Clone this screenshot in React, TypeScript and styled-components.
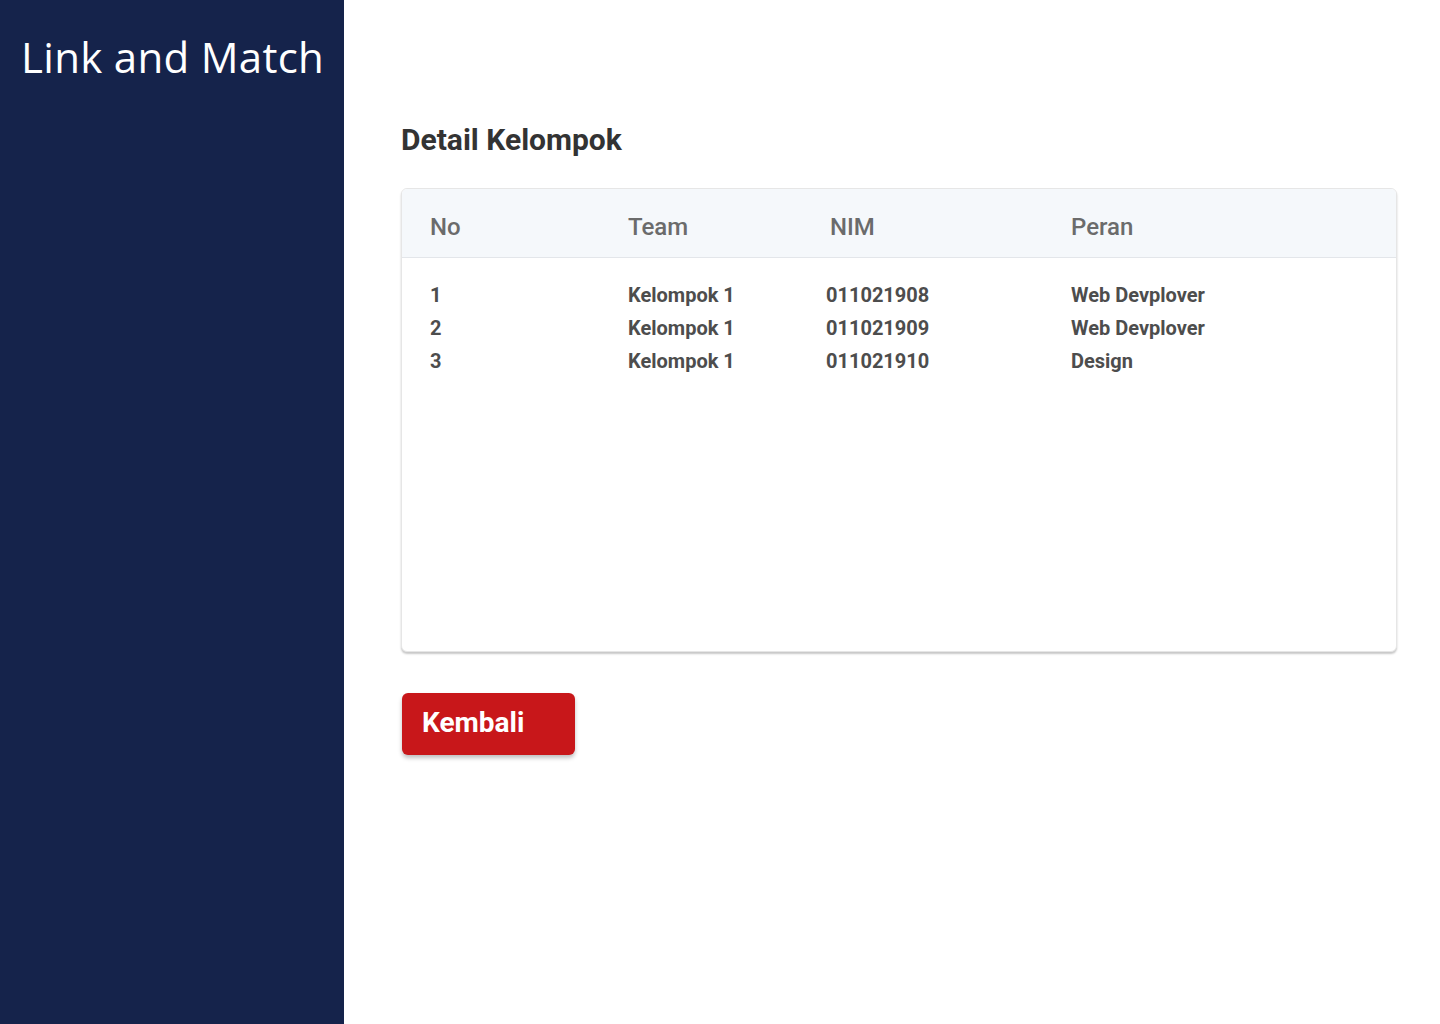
import React from 'react';
import styled, { createGlobalStyle } from 'styled-components';

const GlobalStyle = createGlobalStyle`
  html, body {
    margin: 0;
    padding: 0;
    background: #fff;
  }
  * {
    box-sizing: border-box;
  }
`;

const Layout = styled.div`
  display: flex;
  min-height: 1024px;
  font-family: Roboto, 'Liberation Sans', sans-serif;
`;

const Sidebar = styled.aside`
  width: 344px;
  flex-shrink: 0;
  background-color: #15234b;
  padding: 30px 0 0 21px;
`;

const Brand = styled.h1`
  margin: 0;
  font-family: 'Open Sans', Lato, sans-serif;
  font-weight: 400;
  font-size: 42px;
  letter-spacing: 0.3px;
  line-height: 54px;
  color: #ffffff;
`;

const Main = styled.main`
  flex: 1;
  padding: 120px 44px 0 57px;
`;

const Title = styled.h2`
  margin: 0 0 28px;
  font-size: 30px;
  font-weight: 700;
  line-height: 40px;
  color: #333333;
`;

const Card = styled.div`
  width: 996px;
  height: 464px;
  border: 1px solid #e6e6e6;
  border-radius: 6px;
  background: #fff;
  box-shadow: 0 2px 2px rgba(0, 0, 0, 0.22);
  overflow: hidden;
`;

const Row = styled.div`
  display: grid;
  grid-template-columns: 198px 198px 245px 1fr;
  padding-left: 28px;
`;

const HeadRow = styled(Row)`
  height: 69px;
  padding-top: 7px;
  align-items: center;
  background: #f5f8fb;
  border-bottom: 1px solid #e3e6ea;
`;

const HeadCell = styled.div<{ $shift?: number }>`
  font-size: 24px;
  font-weight: 500;
  color: #6b6b6b;
  padding-left: ${(p) => p.$shift || 0}px;
`;

const Body = styled.div`
  padding-top: 20px;
`;

const BodyRow = styled(Row)`
  height: 33px;
  align-items: center;
`;

const Cell = styled.div`
  font-size: 20px;
  font-weight: 700;
  color: #4d4d4d;
`;

const BackButton = styled.button`
  margin: 41px 0 0 1px;
  width: 173px;
  height: 62px;
  border: none;
  border-radius: 6px;
  background-color: #c8171a;
  color: #fff;
  font-family: Roboto, 'Liberation Sans', sans-serif;
  font-size: 28px;
  font-weight: 700;
  text-align: left;
  padding: 0 0 4px 20px;
  box-shadow: 0 3px 4px rgba(0, 0, 0, 0.25);
  cursor: pointer;
`;

interface Member {
  no: number;
  team: string;
  nim: string;
  peran: string;
}

const members: Member[] = [
  { no: 1, team: 'Kelompok 1', nim: '011021908', peran: 'Web Devplover' },
  { no: 2, team: 'Kelompok 1', nim: '011021909', peran: 'Web Devplover' },
  { no: 3, team: 'Kelompok 1', nim: '011021910', peran: 'Design' },
];

const App: React.FC = () => {
  return (
    <>
      <GlobalStyle />
      <Layout>
        <Sidebar>
          <Brand>Link and Match</Brand>
        </Sidebar>
        <Main>
          <Title>Detail Kelompok</Title>
          <Card>
            <HeadRow>
              <HeadCell>No</HeadCell>
              <HeadCell>Team</HeadCell>
              <HeadCell $shift={4}>NIM</HeadCell>
              <HeadCell>Peran</HeadCell>
            </HeadRow>
            <Body>
              {members.map((m) => (
                <BodyRow key={m.no}>
                  <Cell>{m.no}</Cell>
                  <Cell>{m.team}</Cell>
                  <Cell>{m.nim}</Cell>
                  <Cell>{m.peran}</Cell>
                </BodyRow>
              ))}
            </Body>
          </Card>
          <BackButton>Kembali</BackButton>
        </Main>
      </Layout>
    </>
  );
};

export default App;
